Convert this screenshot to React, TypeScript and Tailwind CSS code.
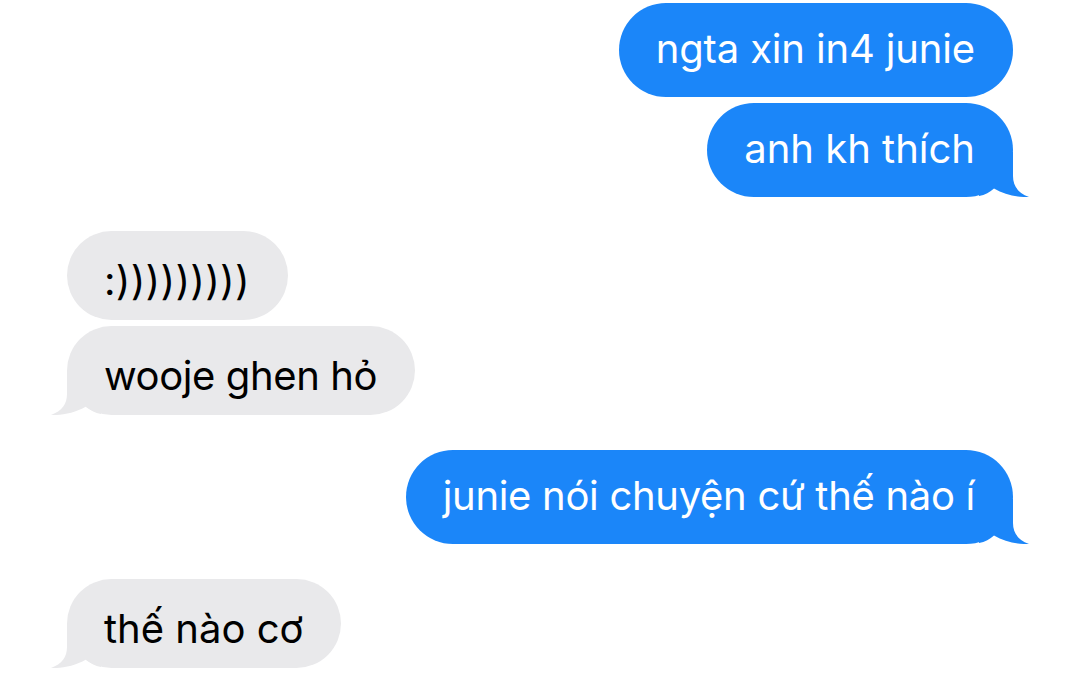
import React from "react";

const BLUE = "#1b86f9";
const GRAY = "#e9e9eb";

function TailRight({ color }: { color: string }) {
  return (
    <svg
      className="absolute bottom-0 right-[-16px]"
      width="50"
      height="45"
      viewBox="0 0 50 45"
    >
      <path
        d="M34 0 L34 24 C34 34 39 41 50 45 C40 45.5 26 43 15 36.5 C11 40 6 43 0 44 L0 0 Z"
        fill={color}
      />
    </svg>
  );
}

function TailLeft({ color }: { color: string }) {
  return (
    <svg
      className="absolute bottom-0 left-[-16px]"
      width="50"
      height="45"
      viewBox="0 0 50 45"
    >
      <path
        d="M16 0 L16 24 C16 34 11 41 0 45 C10 45.5 24 43 35 36.5 C39 40 44 43 50 44 L50 0 Z"
        fill={color}
      />
    </svg>
  );
}

function Bubble({
  text,
  me,
  tail,
  track = "tracking-[-0.15px]",
}: {
  text: string;
  me: boolean;
  tail?: boolean;
  track?: string;
}) {
  return (
    <div className={`flex ${me ? "justify-end" : "justify-start"}`}>
      <div
        className={`relative flex items-center pl-[37px] pr-[38px] text-[40px] leading-none ${track} ${
          me
            ? "h-[94px] rounded-[47px] bg-[#1b86f9] pb-[2px] text-white"
            : "h-[89px] rounded-[45px] bg-[#e9e9eb] pt-[11px] text-black"
        }`}
      >
        {tail && (me ? <TailRight color={BLUE} /> : <TailLeft color={GRAY} />)}
        <span className="relative">{text}</span>
      </div>
    </div>
  );
}

export default function App() {
  return (
    <div
      className="flex h-[695px] w-[1080px] flex-col overflow-hidden bg-white px-[67px] pt-[3px]"
      style={{ fontFamily: "Inter, 'Noto Sans', sans-serif" }}
    >
      <div className="flex flex-col gap-[6px]">
        <Bubble text="ngta xin in4 junie" me />
        <Bubble text="anh kh thích" me tail track="tracking-[0px]" />
      </div>
      <div className="mt-[34px] flex flex-col gap-[6px]">
        <Bubble text=":)))))))))" me={false} track="tracking-[0.3px]" />
        <Bubble text="wooje ghen hỏ" me={false} tail track="tracking-[-0.4px]" />
      </div>
      <div className="mt-[35px] flex flex-col gap-[6px]">
        <Bubble
          text="junie nói chuyện cứ thế nào í"
          me
          tail
          track="tracking-[-0.3px]"
        />
      </div>
      <div className="mt-[35px] flex flex-col gap-[6px]">
        <Bubble text="thế nào cơ" me={false} tail track="tracking-[0px]" />
      </div>
    </div>
  );
}
